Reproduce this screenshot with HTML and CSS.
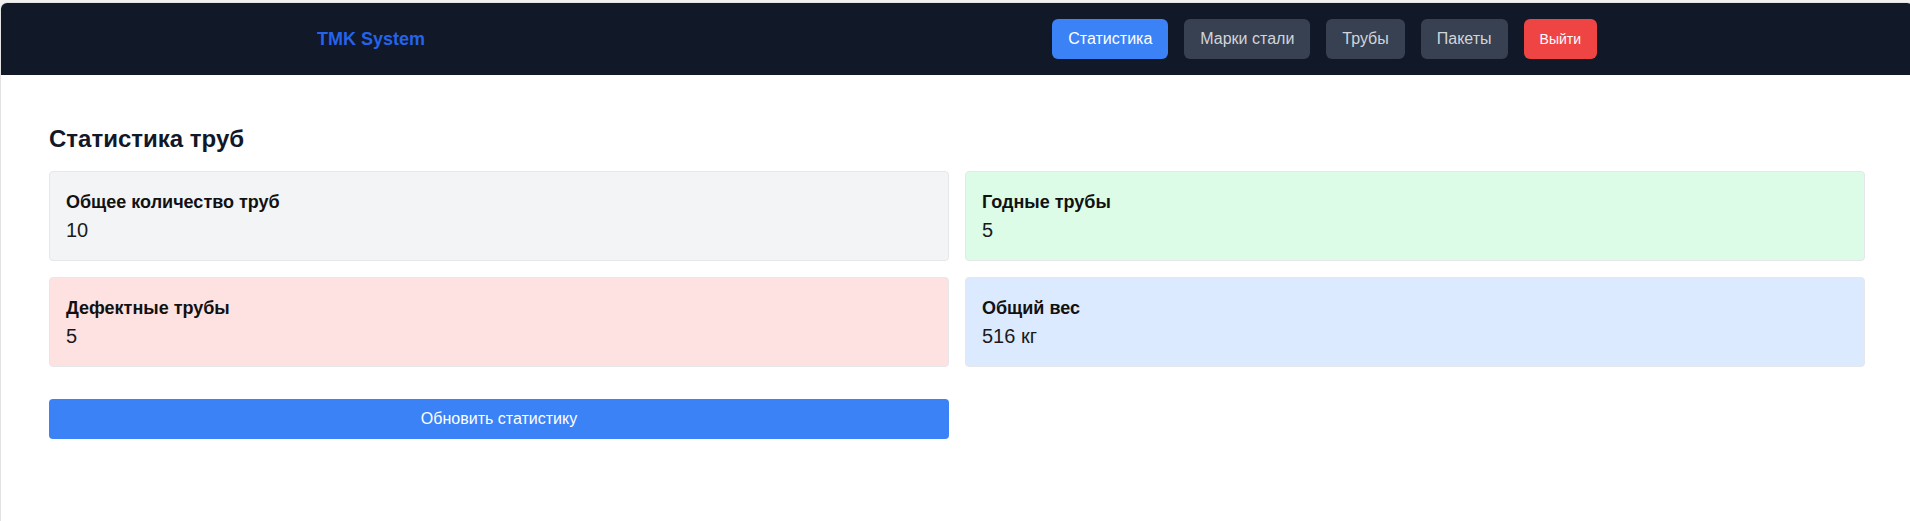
FILE: index.html
```html
<!DOCTYPE html>
<html lang="ru">
<head>
<meta charset="utf-8">
<title>TMK System</title>
<link rel="stylesheet" href="styles.css">
</head>
<body>
<div class="frame">
  <header class="topbar">
    <div class="topbar-inner">
      <div class="logo">TMK System</div>
      <nav class="nav">
        <button class="nav-btn active">Статистика</button>
        <button class="nav-btn">Марки стали</button>
        <button class="nav-btn">Трубы</button>
        <button class="nav-btn">Пакеты</button>
        <button class="nav-btn logout">Выйти</button>
      </nav>
    </div>
  </header>
  <main class="main">
    <h2 class="page-title">Статистика труб</h2>
    <div class="stats-grid">
      <div class="stat-card gray">
        <div class="stat-label">Общее количество труб</div>
        <div class="stat-value">10</div>
      </div>
      <div class="stat-card green">
        <div class="stat-label">Годные трубы</div>
        <div class="stat-value">5</div>
      </div>
      <div class="stat-card red">
        <div class="stat-label">Дефектные трубы</div>
        <div class="stat-value">5</div>
      </div>
      <div class="stat-card blue">
        <div class="stat-label">Общий вес</div>
        <div class="stat-value">516 кг</div>
      </div>
    </div>
    <div class="actions">
      <button class="refresh-btn">Обновить статистику</button>
    </div>
  </main>
</div>
</body>
</html>
```

FILE: styles.css
```css
html, body {
  margin: 0;
  padding: 0;
}
body {
  background: #f0f0f0;
  font-family: "Liberation Sans", Arial, sans-serif;
  overflow: hidden;
  padding-top: 2px;
}
.frame {
  width: 1912px;
  min-height: 540px;
  background: #ffffff;
  border-left: 1px solid #e3e3e3;
  border-right: 1px solid #e3e3e3;
  border-top: 1px solid #e3e3e3;
  border-radius: 7px 7px 0 0;
  overflow: hidden;
}
.topbar {
  background: #111827;
  height: 72px;
  display: flex;
  align-items: center;
}
.topbar-inner {
  width: 1280px;
  margin: 0 auto;
  display: flex;
  justify-content: space-between;
  align-items: center;
}
.logo {
  color: #2563eb;
  font-size: 18px;
  font-weight: bold;
  line-height: 28px;
}
.nav {
  display: flex;
  gap: 16px;
}
.nav-btn {
  font-family: inherit;
  height: 40px;
  padding: 0 16px;
  border: none;
  border-radius: 6px;
  background: #374151;
  color: #d1d5db;
  font-size: 16px;
  cursor: pointer;
}
.nav-btn.active {
  background: #3b82f6;
  color: #ffffff;
}
.nav-btn.logout {
  background: #ef4444;
  color: #ffffff;
  font-size: 14px;
}
.main {
  padding: 48px 48px 40px 48px;
}
.page-title {
  margin: 0 0 16px 0;
  font-size: 24px;
  line-height: 32px;
  font-weight: bold;
  color: #111827;
}
.stats-grid {
  display: grid;
  grid-template-columns: 1fr 1fr;
  gap: 16px;
}
.stat-card {
  border: 1px solid #e5e7eb;
  border-radius: 4px;
  padding: 16px;
}
.stat-card.gray { background: #f3f4f6; }
.stat-card.green { background: #dcfce7; }
.stat-card.red { background: #fee2e2; }
.stat-card.blue { background: #dbeafe; }
.stat-label {
  font-size: 18px;
  line-height: 28px;
  font-weight: bold;
  color: #111111;
}
.stat-value {
  font-size: 20px;
  line-height: 28px;
  color: #1a1a1a;
}
.actions {
  display: grid;
  grid-template-columns: 1fr 1fr;
  gap: 16px;
  margin-top: 32px;
}
.refresh-btn {
  font-family: inherit;
  height: 40px;
  border: none;
  border-radius: 4px;
  background: #3b82f6;
  color: #ffffff;
  font-size: 16px;
  cursor: pointer;
}
```
